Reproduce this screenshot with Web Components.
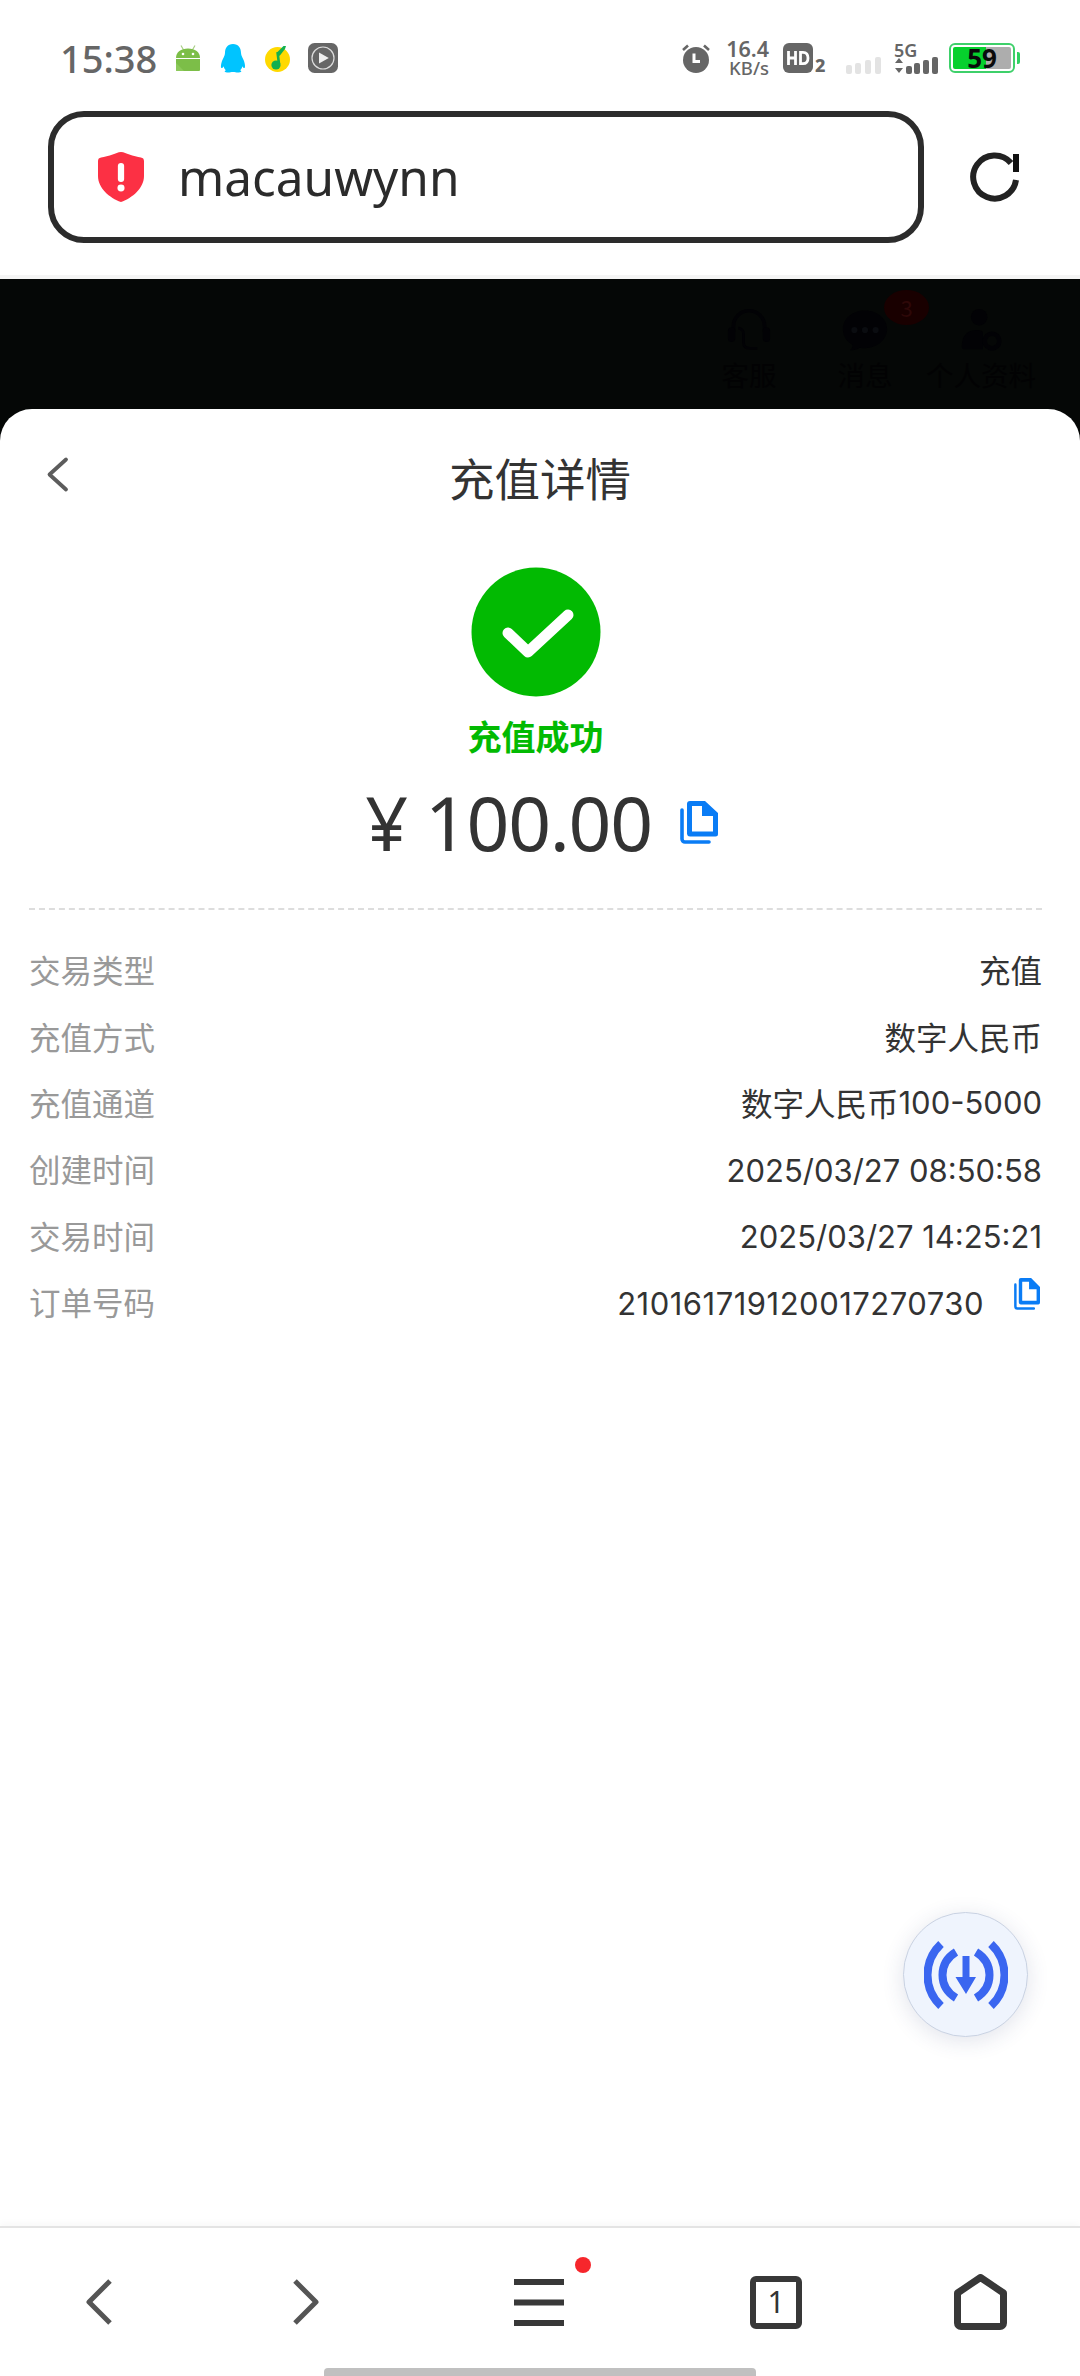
<!DOCTYPE html>
<html lang="zh">
<head>
<meta charset="utf-8">
<title>充值详情</title>
<style>
  html, body { margin: 0; padding: 0; background: #fff; }
  body { width: 1080px; height: 2376px; font-family: "Noto Sans", "Noto Sans CJK SC", sans-serif; overflow: hidden; }
  recharge-app { height: 2376px; }
</style>
</head>
<body>
<recharge-app></recharge-app>

<script>
class StatusBar extends HTMLElement {
    constructor() {
        super();
        this.attachShadow({ mode: 'open' });
        this.shadowRoot.innerHTML = `
            <style>
                :host { display: flex; height: 111px; box-sizing: border-box; padding: 0 60px 0 60px; align-items: flex-start; justify-content: space-between; color: #666; font-family: "Noto Sans", sans-serif; }
                .left, .right { display: flex; align-items: center; height: 40px; margin-top: 38px; }
                .time { font-size: 38px; font-weight: 500; line-height: 40px; width: 116px; }
                svg { display: block; flex: none; }
                .speed { display: flex; flex-direction: column; align-items: flex-end; width: 44px; margin: 0 14px; }
                .speed b { font-size: 21.5px; line-height: 18px; font-weight: 600; white-space: nowrap; }
                .speed span { font-size: 18.5px; line-height: 19px; font-weight: 500; white-space: nowrap; }
                .hd { display: flex; align-items: flex-end; width: 43px; margin-right: 20px; }
                .hd span { font-size: 18px; line-height: 15px; font-weight: 800; margin-left: 2px; }
                .net { display: flex; flex-direction: column; width: 44px; margin-right: 11px; }
                .net span { font-size: 18px; line-height: 14px; font-weight: 600; height: 14px; }
                .battery { width: 71px; height: 30px; flex: none; display: flex; align-items: center; position: relative; }
                .shell { box-sizing: border-box; width: 66px; height: 30px; border: 2px solid #3ed06a; border-radius: 6px; padding: 2px; display: flex; }
                .fill { width: 33px; background: #06d02d; border-radius: 2px 0 0 2px; }
                .rest { flex: 1; background: #adadad; border-radius: 0 2px 2px 0; }
                .tip { width: 3px; height: 12px; background: #2fd060; margin-left: 2px; border-radius: 0 2px 2px 0; }
                .level { position: absolute; left: 0; width: 66px; text-align: center; font-size: 26px; line-height: 30px; font-weight: 700; color: #0a0a0a; }
            </style>
            <div class="left">
                <span class="time">15:38</span>
                <svg width="24" height="26" viewBox="0 0 24 26" style="margin-right:20px"><path d="M5 .5l2.600 4.500M19 .5L16.400 5" stroke="#a9cf86" stroke-width="1.200"/><path d="M0 13C0 7 5 3.500 12 3.500S24 7 24 13z" fill="#7cbe48"/><path d="M0 14h24v11a1 1 0 0 1-1 1H1a1 1 0 0 1-1-1z" fill="#7cbe48"/><path d="M0 18l8 8H1a1 1 0 0 1-1-1z" fill="#8cc95a"/><circle cx="7" cy="9" r="1.300" fill="#fff"/><circle cx="17" cy="9" r="1.300" fill="#fff"/></svg>
                <svg width="26" height="29" viewBox="0 0 26 29" style="margin-right:19px"><path d="M13 0c5.500 0 8 4 8 9 0 3 2 5 3 8s1.500 6.500.5 7c-.7.300-1.500-.5-2.200-1.700-.2 1.700-1 3-2.300 4 1 .3 1.500 1 1.200 1.500-.4.700-3.700 1-5.700.5-1.500-.3-3.500-.3-5 0-2 .5-5.300.2-5.700-.5-.3-.5.2-1.200 1.200-1.500-1.300-1-2.100-2.300-2.300-4-.7 1.200-1.500 2-2.200 1.700-1-.5-.5-4 .5-7s3-5 3-8c0-5 2.500-9 8-9z" fill="#00c4ff"/></svg>
                <svg width="25" height="27" viewBox="0 0 25 27" style="margin-right:18px"><circle cx="12.500" cy="14.500" r="12.500" fill="#ffd900"/><path d="M12.500 7l1.500 12" stroke="#12b04f" stroke-width="2.600" fill="none"/><path d="M12 7.500L18.500 1h2.500l-1 3-5.500 7z" fill="#12b04f"/><circle cx="11" cy="20" r="4.600" fill="#12b04f"/></svg>
                <svg width="30" height="30" viewBox="0 0 30 30"><rect width="30" height="30" rx="6.500" fill="#666"/><circle cx="15" cy="15" r="11" fill="none" stroke="#ddd" stroke-width="1.200"/><path d="M11 9.500l9.800 5.500L11 20.500z" fill="#eee"/></svg>
            </div>
            <div class="right">
                <svg width="30" height="30" viewBox="0 0 30 30"><circle cx="15" cy="17" r="13" fill="#666"/><path d="M2 7l5-4.500M28 7l-5-4.500" stroke="#666" stroke-width="2.600"/><path d="M13 10.500v8h6" stroke="#fff" stroke-width="3" fill="none"/></svg>
                <div class="speed"><b>16.4</b><span>KB/s</span></div>
                <div class="hd">
                    <svg width="30" height="30" viewBox="0 0 30 30"><rect width="30" height="30" rx="6" fill="#666"/><path d="M5.500 8v14M12.500 8v14M5.500 15h7M17.500 9.300v11.400h2.500c3.500 0 5-2.300 5-5.700s-1.500-5.700-5-5.700z" stroke="#fff" stroke-width="2.800" fill="none"/></svg>
                    <span>2</span>
                </div>
                <svg width="35" height="17" viewBox="0 0 35 17" style="margin:14px 13px 0 0"><g fill="#e3e3e3"><rect x="0" y="8" width="6" height="9" rx="2"/><rect x="9" y="6" width="6" height="11" rx="2"/><rect x="19" y="3" width="6" height="14" rx="2"/><rect x="29" y="0" width="6" height="17" rx="2"/></g></svg>
                <div class="net">
                    <span>5G</span>
                    <svg width="44" height="17" viewBox="0 0 44 17"><path d="M5 1l4 5H1zM1 11h8l-4 5z" fill="#666"/><g fill="#666"><rect x="12" y="9" width="6" height="8" rx="2"/><rect x="20" y="6" width="6" height="11" rx="2"/><rect x="29" y="3" width="6" height="14" rx="2"/><rect x="38" y="0" width="6" height="17" rx="2"/></g></svg>
                </div>
                <div class="battery">
                    <div class="shell"><div class="fill"></div><div class="rest"></div></div>
                    <div class="tip"></div>
                    <div class="level">59</div>
                </div>
            </div>
        `;
    }
}
customElements.define('status-bar', StatusBar);

class UrlBar extends HTMLElement {
    constructor() {
        super();
        this.attachShadow({ mode: 'open' });
        this.shadowRoot.innerHTML = `
            <style>
                :host { display: flex; align-items: center; height: 132px; padding-left: 48px; }
                .box { box-sizing: border-box; width: 876px; height: 132px; border: 6px solid #2c2c2c; border-radius: 36px; display: flex; align-items: center; padding-left: 44px; }
                .text { margin-left: 34px; font-size: 49.5px; color: #2b2b2b; font-family: "Noto Sans", sans-serif; }
                .reload { margin-left: 46px; display: block; }
            </style>
            <div class="box">
                <svg width="46" height="50" viewBox="0 0 44 50" preserveAspectRatio="none"><path d="M22 0c3 0 5 1.500 8 2.500 3.500 1.200 8 2.500 11 3 2 .3 3 1.500 3 3.500v15c0 12-11 22-22 26C11 46 0 36 0 24V9c0-2 1-3.200 3-3.500 3-.5 7.500-1.800 11-3C17 1.500 19 0 22 0z" fill="#fc3044"/><rect x="19" y="11" width="6" height="19" rx="3" fill="#fff"/><circle cx="22" cy="36" r="3.400" fill="#fff"/></svg>
                <span class="text"><slot></slot></span>
            </div>
            <svg class="reload" width="49" height="50" viewBox="0 0 49 50"><path d="M46 28A21.500 21.500 0 1 1 41 11" fill="none" stroke="#222" stroke-width="6"/><rect x="43" y="2" width="6" height="18" fill="#111"/></svg>
        `;
    }
}
customElements.define('url-bar', UrlBar);

class DimHeader extends HTMLElement {
    constructor() {
        super();
        this.attachShadow({ mode: 'open' });
        this.shadowRoot.innerHTML = `
            <style>
                :host { display: flex; justify-content: flex-end; gap: 6px; box-sizing: border-box; height: 134px; margin-top: 32px; border-top: 4px solid #f5f5f5; background: #050706; color: #020203; padding-right: 44px; font-family: "Noto Sans CJK SC", sans-serif; }
                .item { display: flex; flex-direction: column; align-items: center; width: 110px; font-size: 27.5px; line-height: 34px; position: relative; padding-top: 29px; box-sizing: border-box; }
                svg { display: block; height: 44px; margin-bottom: 5px; }
                .badge { position: absolute; left: 74px; top: 11px; width: 45px; height: 35px; border-radius: 50%; background: #190000; color: #2e0808; font-size: 22px; line-height: 35px; text-align: center; }
            </style>
            <div class="item">
                <svg width="48" viewBox="0 0 48 48"><path d="M7 26V20a17 17 0 0 1 34 0v6" fill="none" stroke="#020205" stroke-width="4"/><rect x="1" y="21" width="8" height="16" rx="4" fill="#020205"/><rect x="39" y="21" width="8" height="16" rx="4" fill="#020205"/><path d="M12 22a6 6 0 0 1 6 6v10c0 4 3 6 7 6h8" fill="none" stroke="#020205" stroke-width="3"/></svg>
                客服
            </div>
            <div class="item">
                <svg width="46" viewBox="0 0 52 48"><path d="M26 2C12 2 1 11 1 23c0 8 4 14 11 18 0 2-1 4-3 6 4 0 8-1 11-3 2 .4 4 .6 6 .6 14 0 25-10 25-21.600S40 2 26 2z" fill="#020205"/><g fill="#0a0c10"><circle cx="14" cy="24" r="3.500"/><circle cx="26" cy="24" r="3.500"/><circle cx="38" cy="24" r="3.500"/></g></svg>
                消息
                <div class="badge">3</div>
            </div>
            <div class="item">
                <svg width="42" viewBox="0 0 44 48"><circle cx="20" cy="10" r="9" fill="#020205"/><path d="M1 42c0-12 6-18 17-18 4 0 6 1 6 3v18H3c-1 0-2-1-2-3z" fill="#020205"/><circle cx="34" cy="36" r="8" fill="none" stroke="#020205" stroke-width="5"/></svg>
                个人资料
            </div>
        `;
    }
}
customElements.define('dim-header', DimHeader);

class CopyIcon extends HTMLElement {
    constructor() {
        super();
        this.attachShadow({ mode: 'open' });
        this.shadowRoot.innerHTML = `
            <style>
                :host { display: inline-block; line-height: 0; }
                svg { display: block; width: 100%; height: 100%; }
            </style>
            <svg viewBox="0 0 38 43" preserveAspectRatio="none">
                <path d="M10 0h15l13 12v21a2.500 2.500 0 0 1-2.500 2.500H10A3 3 0 0 1 7 33V3a3 3 0 0 1 3-3z" fill="#0a7cf5"/>
                <path d="M12 5h10v10h11v15.500H12z" fill="#fff"/>
                <path d="M2 9v29a3 3 0 0 0 3 3h24" fill="none" stroke="#0a7cf5" stroke-width="3.600" stroke-linecap="round"/>
            </svg>
        `;
    }
}
customElements.define('copy-icon', CopyIcon);

class DetailRow extends HTMLElement {
    constructor() {
        super();
        this.attachShadow({ mode: 'open' });
        this.shadowRoot.innerHTML = `
            <style>
                :host { display: flex; align-items: center; justify-content: space-between; height: 66.4px; font-size: 31.5px; color: #333; font-family: "Noto Sans", "Noto Sans CJK SC", sans-serif; }
                .label { color: #999; }
                .value { display: flex; align-items: center; }
            </style>
            <span class="label"><slot name="label"></slot></span>
            <span class="value"><slot></slot></span>
        `;
    }
}
customElements.define('detail-row', DetailRow);

class DownloadFab extends HTMLElement {
    constructor() {
        super();
        this.attachShadow({ mode: 'open' });
        this.shadowRoot.innerHTML = `
            <style>
                :host { display: flex; align-items: center; justify-content: center; position: absolute; left: 903px; top: 1503px; width: 125px; height: 125px; box-sizing: border-box; border-radius: 50%; background: #eff4fd; border: 1px solid #c9d2e2; box-shadow: 0 4px 22px rgba(40, 60, 110, .14); }
            </style>
            <svg width="84" height="68" viewBox="0 0 84 68">
                <g fill="none" stroke="#3a66f0" stroke-width="8">
                    <path d="M17 3C-1 20-1 48 17 65"/>
                    <path d="M67 3c18 17 18 45 0 62"/>
                    <path d="M32 11C14 22 14 46 32 57"/>
                    <path d="M52 11c18 11 18 35 0 46"/>
                </g>
                <path d="M38.500 15h7v21H52L42 53 31.500 36h7z" fill="#3a66f0"/>
            </svg>
        `;
    }
}
customElements.define('download-fab', DownloadFab);

class DetailSheet extends HTMLElement {
    constructor() {
        super();
        this.attachShadow({ mode: 'open' });
        this.shadowRoot.innerHTML = `
            <style>
                :host { display: block; position: relative; flex: 1; background: #050706; font-family: "Noto Sans", "Noto Sans CJK SC", sans-serif; }
                .sheet { position: relative; box-sizing: border-box; height: 100%; background: #fff; border-radius: 32px 32px 0 0; display: flex; flex-direction: column; }
                .head { height: 136px; display: flex; align-items: center; justify-content: center; position: relative; }
                .title { font-size: 45.5px; color: #333; }
                .back { position: absolute; left: 46px; top: 47px; }
                .result { display: flex; flex-direction: column; align-items: center; padding-right: 9px; }
                .tick { display: block; margin-top: 22px; }
                .state { margin-top: 15px; height: 50px; line-height: 50px; font-size: 34px; font-weight: 700; color: #02ba02; }
                .amount { display: flex; align-items: center; height: 90px; margin-top: 15px; margin-left: 12px; }
                .money { font-size: 75px; letter-spacing: -1.300px; color: #333; line-height: 90px; }
                .amount copy-icon { width: 38px; height: 43px; margin-left: 28px; margin-top: 0; }
                .rule { margin: 41px 38px 0 29px; border-top: 2px dashed #ddd; }
                .rows { margin: 26px 38px 0 29px; }
            </style>
            <div class="sheet">
                <div class="head">
                    <svg class="back" width="23" height="37" viewBox="0 0 23 37"><path d="M20 3.500L3.500 18.500 20 33.500" fill="none" stroke="#5c5c5c" stroke-width="3.800" stroke-linecap="round" stroke-linejoin="round"/></svg>
                    <span class="title"><slot name="title"></slot></span>
                </div>
                <div class="result">
                    <svg class="tick" width="130" height="130" viewBox="0 0 130 130"><circle cx="65" cy="65" r="64.500" fill="#02ba02"/><path d="M37 66l20 19 40-37" fill="none" stroke="#fff" stroke-width="11" stroke-linecap="round" stroke-linejoin="round"/></svg>
                    <div class="state"><slot name="state"></slot></div>
                    <div class="amount"><span class="money"><slot name="amount"></slot></span><copy-icon></copy-icon></div>
                </div>
                <div class="rule"></div>
                <div class="rows"><slot></slot></div>
                <download-fab></download-fab>
            </div>
        `;
    }
}
customElements.define('detail-sheet', DetailSheet);

class BottomNav extends HTMLElement {
    constructor() {
        super();
        this.attachShadow({ mode: 'open' });
        this.shadowRoot.innerHTML = `
            <style>
                :host { display: block; position: relative; height: 150px; box-sizing: border-box; background: #fff; border-top: 2px solid #e4e4e4; box-shadow: 0 -4px 6px rgba(0, 0, 0, .025); }
                .row { display: grid; grid-template-columns: 198px 216px 250px 224px 184px; align-items: center; height: 96px; margin-top: 26px; }
                .row > div { display: flex; justify-content: center; position: relative; }
                svg { display: block; }
                .dot { position: absolute; left: 61px; top: -22px; width: 16px; height: 16px; border-radius: 50%; background: #f6262c; }
                .menu { position: relative; display: block; width: 50px; }
                .pill { position: absolute; left: 324px; bottom: 0; width: 432px; height: 8px; background: #c0c0c0; border-radius: 4px 4px 0 0; }
            </style>
            <div class="row">
                <div><svg width="26" height="46" viewBox="0 0 26 46"><path d="M24 2L3 23l21 21" fill="none" stroke="#555" stroke-width="5" stroke-linejoin="round"/></svg></div>
                <div><svg width="26" height="46" viewBox="0 0 26 46"><path d="M2 2l21 21L2 44" fill="none" stroke="#555" stroke-width="5" stroke-linejoin="round"/></svg></div>
                <div><span class="menu"><svg width="50" height="47" viewBox="0 0 50 47"><g fill="#383838"><rect width="50" height="6"/><rect y="20.500" width="50" height="6"/><rect y="41" width="50" height="6"/></g></svg><span class="dot"></span></span></div>
                <div><svg width="52" height="53" viewBox="0 0 52 53"><rect x="3" y="3" width="46" height="47" rx="3" fill="none" stroke="#383838" stroke-width="6"/><text x="26" y="37" text-anchor="middle" font-family="Noto Sans, sans-serif" font-size="30" fill="#333">1</text></svg></div>
                <div><svg width="53" height="56" viewBox="0 0 53 56"><path d="M26.500 3.500L3.500 19v30a3.500 3.500 0 0 0 3.500 3.500h39a3.500 3.500 0 0 0 3.500-3.500V19z" fill="none" stroke="#383838" stroke-width="7" stroke-linejoin="round"/></svg></div>
            </div>
            <div class="pill"></div>
        `;
    }
}
customElements.define('bottom-nav', BottomNav);

class RechargeApp extends HTMLElement {
    constructor() {
        super();
        this.attachShadow({ mode: 'open' });
        this.shadowRoot.innerHTML = `
            <style>
                :host { display: flex; flex-direction: column; width: 1080px; height: 2376px; background: #fff; }
                .num { font-family: Inter, "Noto Sans", sans-serif; font-size: 31px; margin-top: 2px; }
                .solo { margin-top: 4px; }
                .order { letter-spacing: .5px; }
            </style>
            <status-bar></status-bar>
            <url-bar>macauwynn</url-bar>
            <dim-header></dim-header>
            <detail-sheet>
                <span slot="title">充值详情</span>
                <span slot="state">充值成功</span>
                <span slot="amount">¥ 100.00</span>
                <detail-row><span slot="label">交易类型</span>充值</detail-row>
                <detail-row><span slot="label">充值方式</span>数字人民币</detail-row>
                <detail-row><span slot="label">充值通道</span>数字人民币<span class="num">100-5000</span></detail-row>
                <detail-row><span slot="label">创建时间</span><span class="num solo">2025/03/27 08:50:58</span></detail-row>
                <detail-row><span slot="label">交易时间</span><span class="num solo">2025/03/27 14:25:21</span></detail-row>
                <detail-row><span slot="label">订单号码</span><span class="num solo order">210161719120017270730</span><copy-icon style="width:26px;height:32px;margin:-14px 2px 0 30px"></copy-icon></detail-row>
            </detail-sheet>
            <bottom-nav></bottom-nav>
        `;
    }
}
customElements.define('recharge-app', RechargeApp);
</script>
</body>
</html>
